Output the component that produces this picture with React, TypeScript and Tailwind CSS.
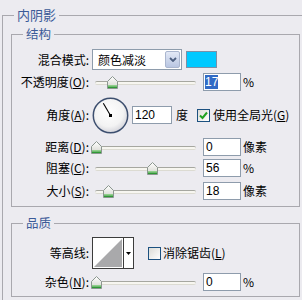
import React from 'react';

const Mn = ({ c }: { c: string }) => <span className="underline underline-offset-[1px]">{c}</span>;

const Label = ({ children }: { children: React.ReactNode }) => (
  <div className="w-[77px] shrink-0 text-right leading-[14px] whitespace-nowrap">{children}</div>
);

const Thumb = () => (
  <svg width="11" height="13" viewBox="0 0 11 13">
    <defs>
      <linearGradient id="thumbFill" x1="0" y1="0" x2="0" y2="1">
        <stop offset="0" stopColor="#ffffff" />
        <stop offset="1" stopColor="#d3d4cc" />
      </linearGradient>
    </defs>
    <path d="M0.5 5.5 L5.5 0.5 L10.5 5.5 V12.5 H0.5 Z" fill="url(#thumbFill)" stroke="#8b968f" />
    <rect x="1" y="9" width="9" height="1.5" fill="#8fd08a" />
    <rect x="1" y="10.5" width="9" height="1.5" fill="#2f9a35" />
  </svg>
);

// thumb left offset (px) inside the 110px slider
const Slider = ({ pos }: { pos: number }) => (
  <div className="relative ml-[2px] h-[13px] w-[110px] shrink-0">
    <div className="absolute left-[4px] top-[5px] h-[4px] w-[101px] rounded-full border-t border-b border-[#a6a7a0] border-b-[#dcdbd2] bg-[#f7f6f0]" />
    <div className="absolute top-0" style={{ left: pos }}>
      <Thumb />
    </div>
  </div>
);

const NumBox = ({ value, selected, wide }: { value: string; selected?: boolean; wide?: boolean }) => (
  <div
    className={
      'flex h-[18px] shrink-0 items-center border border-[#8e9cac] bg-white pl-[1px] font-["Liberation_Sans",sans-serif] text-[12px] leading-[14px] ' +
      (wide ? 'w-[40px]' : 'w-[38px]')
    }
  >
    {selected ? <span className="bg-[#316ac5] px-[0px] text-white">{value}</span> : <span className="pl-[1px]">{value}</span>}
  </div>
);

const Unit = ({ children }: { children: React.ReactNode }) => (
  <div className="ml-[2px] leading-[14px]">{children}</div>
);

const Check = ({ checked }: { checked?: boolean }) => (
  <div className="flex h-[13px] w-[13px] shrink-0 items-center justify-center border border-[#1c5180] bg-gradient-to-br from-[#dcdcd7] to-white">
    {checked && (
      <svg width="11" height="11" viewBox="0 0 11 11">
        <path d="M2 5.5 L4.5 8 L9 2.5" fill="none" stroke="#21a121" strokeWidth="2" />
      </svg>
    )}
  </div>
);

const Dial = () => (
  <svg width="37" height="37" viewBox="0 0 37 37" className="ml-[3px] shrink-0">
    <defs>
      <radialGradient id="dialFill" cx="0.45" cy="0.4" r="0.6">
        <stop offset="0" stopColor="#ffffff" />
        <stop offset="0.7" stopColor="#f3f3f3" />
        <stop offset="1" stopColor="#d6d6dc" />
      </radialGradient>
    </defs>
    <circle cx="18.5" cy="18.5" r="17.2" fill="url(#dialFill)" stroke="#3d4f6f" strokeWidth="1.5" />
    <line x1="18.5" y1="18.5" x2="11.3" y2="6.2" stroke="#000" strokeWidth="1.1" />
    <rect x="17" y="17" width="3" height="3" fill="#000" />
  </svg>
);

const Contour = () => (
  <div className="ml-[3px] flex h-[32px] w-[42px] shrink-0 border border-[#3c3c3c] bg-white">
    <svg width="30" height="30" viewBox="0 0 30 30">
      <path d="M1 29 L29 1 V29 Z" fill="#a9a9ab" />
    </svg>
    <div className="flex flex-1 items-center justify-center border-l border-[#3c3c3c]">
      <svg width="5" height="3" viewBox="0 0 5 3">
        <path d="M0 0 H5 L2.5 3 Z" fill="#000" />
      </svg>
    </div>
  </div>
);

const Legend = ({ children, big }: { children: React.ReactNode; big?: boolean }) => (
  <legend className={'ml-[11px] px-[3px] leading-[16px] text-[#3b5a98] ' + (big ? 'text-[13px]' : 'text-[12.5px]')}>
    {children}
  </legend>
);

export default function App() {
  return (
    <div className="h-[300px] w-[302px] overflow-hidden bg-[#ecebf0] pl-[2px] pt-[7px] font-['Noto_Sans_CJK_SC','Liberation_Sans',sans-serif] text-[12px] text-black">
      <fieldset className="h-[400px] w-[340px] border-l border-t border-[#a9a8ae]">
        <Legend big>内阴影</Legend>
        <div className="pl-[8px] pt-[3px]">
          <fieldset className="w-[289px] border border-[#a9a8ae]">
            <Legend>结构</Legend>
            <div className="pb-[6px] pt-[7px]">
              <div className="flex h-[21px] items-center">
                <Label>混合模式:</Label>
                <div className="ml-[3px] flex h-[21px] w-[90px] items-center border border-[#8e9cac] bg-white">
                  <span className="flex-1 pl-[5px] leading-[14px]">颜色减淡</span>
                  <div className="mr-[1px] flex h-[17px] w-[15px] items-center justify-center rounded-[2px] border border-[#aab6cf] bg-gradient-to-b from-[#e3e9f6] to-[#b9c6e2]">
                    <svg width="8" height="5" viewBox="0 0 8 5">
                      <path d="M1 1 L4 4 L7 1" fill="none" stroke="#4d5f80" strokeWidth="1.8" />
                    </svg>
                  </div>
                </div>
                <div className="ml-[4px] h-[17px] w-[31px] border border-[#7d90a6] bg-[#00c9ff]" />
              </div>

              <div className="mt-[3px] flex h-[18px] items-center">
                <Label>不透明度(<Mn c="O" />):</Label>
                <Slider pos={16} />
                <div className="ml-[2px]"><NumBox value="17" selected /></div>
                <Unit>%</Unit>
              </div>

              <div className="mt-[6px] flex h-[36px] items-center">
                <Label>角度(<Mn c="A" />):</Label>
                <Dial />
                <div className="ml-[3px]"><NumBox value="120" wide /></div>
                <div className="ml-[4px] leading-[14px]">度</div>
                <div className="ml-[9px]"><Check checked /></div>
                <div className="ml-[3px] leading-[14px] whitespace-nowrap">使用全局光(<Mn c="G" />)</div>
              </div>

              <div className="mt-[5px] flex h-[18px] items-center">
                <Label>距离(<Mn c="D" />):</Label>
                <Slider pos={0} />
                <div className="ml-[2px]"><NumBox value="0" /></div>
                <Unit>像素</Unit>
              </div>

              <div className="mt-[3px] flex h-[18px] items-center">
                <Label>阻塞(<Mn c="C" />):</Label>
                <Slider pos={56} />
                <div className="ml-[2px]"><NumBox value="56" /></div>
                <Unit>%</Unit>
              </div>

              <div className="mt-[5px] flex h-[18px] items-center">
                <Label>大小(<Mn c="S" />):</Label>
                <Slider pos={12} />
                <div className="ml-[2px]"><NumBox value="18" /></div>
                <Unit>像素</Unit>
              </div>
            </div>
          </fieldset>

          <fieldset className="mt-[8px] w-[289px] border border-[#a9a8ae]">
            <Legend>品质</Legend>
            <div className="pb-[5px] pt-[6px]">
              <div className="flex h-[32px] items-center">
                <Label>等高线:</Label>
                <Contour />
                <div className="ml-[14px]"><Check /></div>
                <div className="ml-[2px] leading-[14px] whitespace-nowrap">消除锯齿(<Mn c="L" />)</div>
              </div>
              <div className="mt-[4px] flex h-[18px] items-center">
                <Label>杂色(<Mn c="N" />):</Label>
                <Slider pos={0} />
                <div className="ml-[2px]"><NumBox value="0" /></div>
                <Unit>%</Unit>
              </div>
            </div>
          </fieldset>
        </div>
      </fieldset>
    </div>
  );
}
